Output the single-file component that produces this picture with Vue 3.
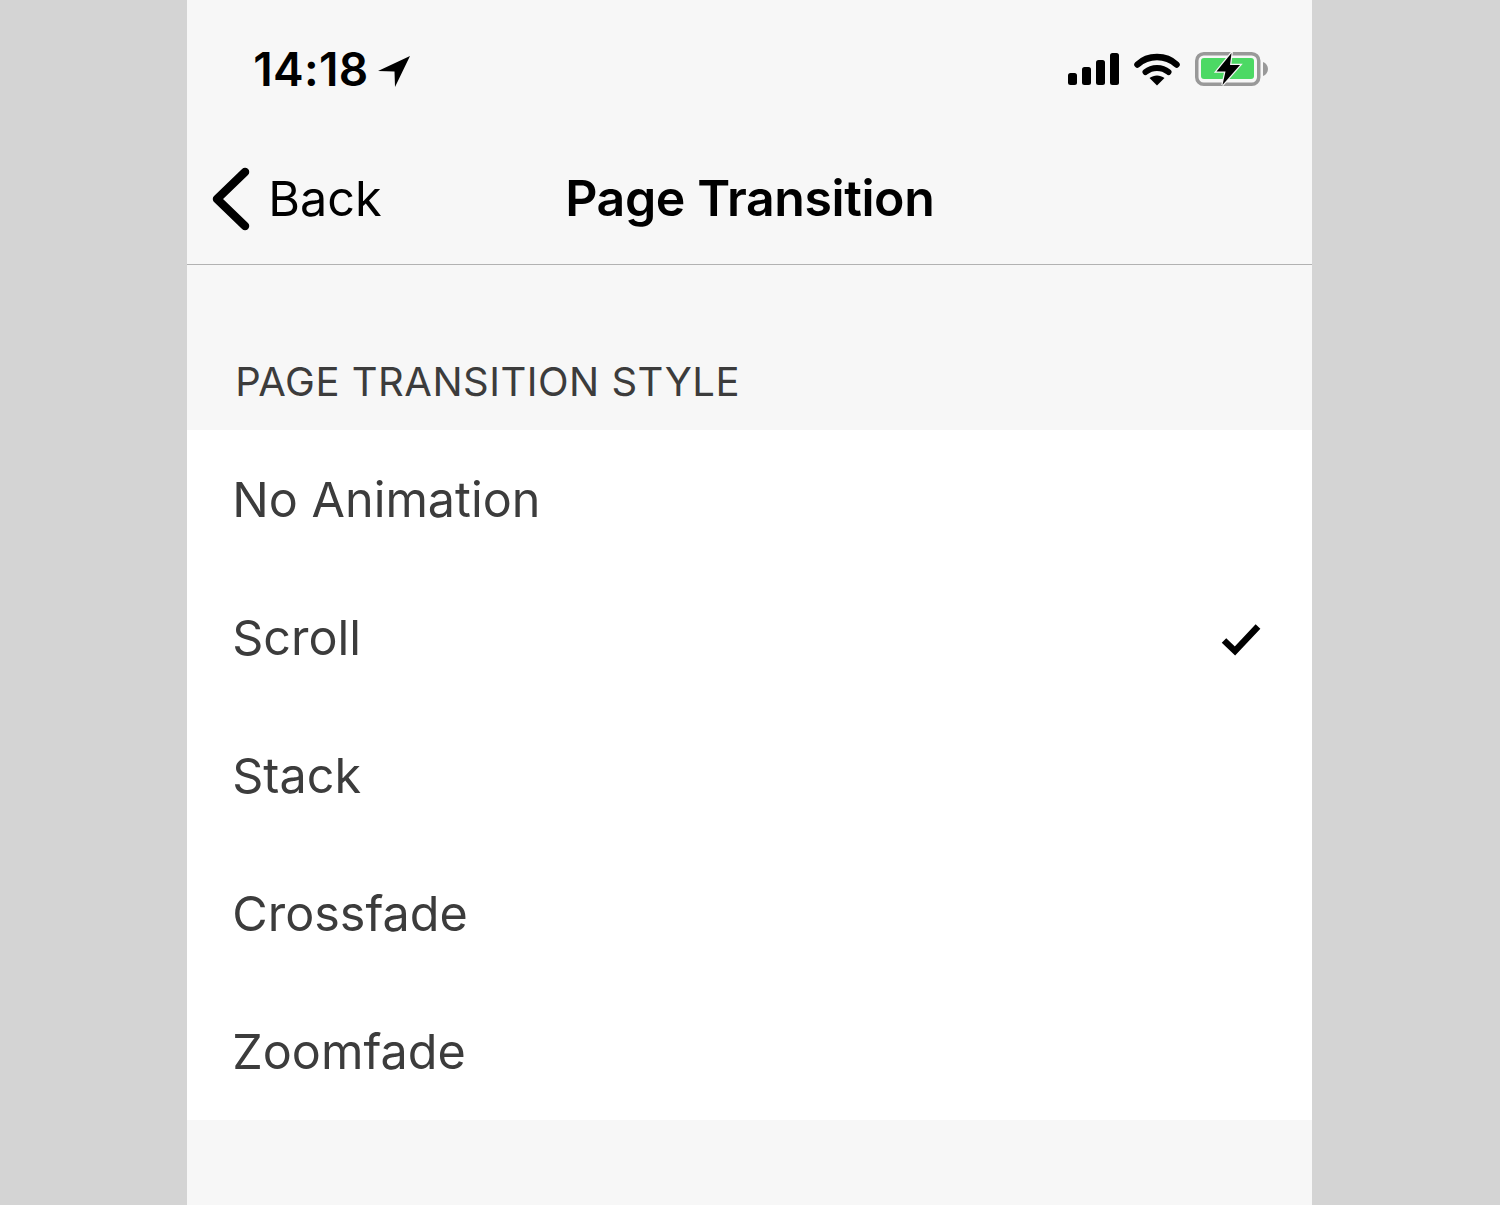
<template>
  <div class="page">
    <div class="phone">
      <div class="status-bar">
        <div class="status-left">
          <span class="time">14:18</span>
          <svg class="location" width="34" height="34" viewBox="0 0 34 34">
            <path d="M1 17 L33 2 L18 33 L17.5 17.5 Z" fill="#000" />
          </svg>
        </div>
        <div class="status-right">
          <svg width="52" height="32" viewBox="0 0 52 32">
            <rect x="0" y="20" width="9" height="12" rx="2.5" />
            <rect x="14" y="14" width="9" height="18" rx="2.5" />
            <rect x="28" y="7" width="9" height="25" rx="2.5" />
            <rect x="42" y="0" width="9" height="32" rx="2.5" />
          </svg>
          <svg width="46" height="34" viewBox="0 0 46 34">
            <path d="M3.5 12.5 C14 2.5 32 2.5 42.5 12.5" fill="none" stroke="#000" stroke-width="6.5" stroke-linecap="round" />
            <path d="M11.5 20 C18 14.5 28 14.5 34.5 20" fill="none" stroke="#000" stroke-width="6" stroke-linecap="round" />
            <path d="M15.5 26 C20 22.5 26 22.5 30.5 26 L23 33.5 Z" fill="#000" />
          </svg>
          <svg class="battery" width="74" height="36" viewBox="0 0 74 36">
            <rect x="1.75" y="2.75" width="62" height="30.5" rx="7" fill="none" stroke="#999" stroke-width="3.5" />
            <rect x="6" y="7" width="53" height="21" rx="3" fill="#4cd964" />
            <path d="M68 11 C71 12 73 15 73 18 C73 21 71 24 68 25 Z" fill="#999" />
            <path d="M36.5 2 L21.5 20.5 L30.5 20.5 L27.5 34 L45 14 L35 14 Z" fill="#000" stroke="#f7f7f7" stroke-width="2.5" paint-order="stroke" />
          </svg>
        </div>
      </div>

      <div class="nav-bar">
        <div class="back">
          <svg width="40" height="66" viewBox="0 0 40 66">
            <path d="M34 6 L6 33 L34 60" fill="none" stroke="#000" stroke-width="8.5" stroke-linecap="round" stroke-linejoin="round" />
          </svg>
          <span>Back</span>
        </div>
        <div class="title">Page Transition</div>
      </div>

      <div class="section-header">PAGE TRANSITION STYLE</div>

      <ul class="options">
        <li v-for="option in options" :key="option" class="option">
          <span>{{ option }}</span>
          <svg v-if="option === selected" class="check" width="40" height="34" viewBox="0 0 40 34">
            <path d="M3 16.5 L14 27 L37 2.5" fill="none" stroke="#000" stroke-width="6.5" />
          </svg>
        </li>
      </ul>
    </div>
  </div>
</template>

<script setup>
const options = ['No Animation', 'Scroll', 'Stack', 'Crossfade', 'Zoomfade'];
const selected = 'Scroll';
</script>

<style>
html, body { margin: 0; background: #d4d4d4; }
</style>

<style scoped>
.page {
  height: 1205px;
  display: flex;
  justify-content: center;
  background: #d4d4d4;
  font-family: Inter, "Liberation Sans", sans-serif;
  overflow: hidden;
}
.phone { width: 1125px; margin-left: -0.5px; background: #f7f7f7; color: #000; }

.status-bar {
  height: 132px;
  box-sizing: border-box;
  padding: 6px 43px 0 66px;
  display: flex;
  justify-content: space-between;
  align-items: center;
}
.status-left { display: flex; align-items: center; gap: 9px; }
.time { font-size: 46px; font-weight: 600; letter-spacing: 0.3px; }
.location { margin-top: 4px; }
.status-right { display: flex; align-items: center; gap: 14px; }
.battery { margin-left: 1px; }

.nav-bar {
  height: 133px;
  box-sizing: border-box;
  border-bottom: 1px solid #b2b2b2;
  position: relative;
  display: flex;
  align-items: center;
  justify-content: center;
}
.back {
  position: absolute;
  left: 24px;
  top: 32px;
  display: flex;
  align-items: center;
  gap: 17px;
  font-size: 48.5px;
}
.back svg { margin-top: 2px; }
.title { font-size: 50px; font-weight: 600; letter-spacing: -0.4px; }

.section-header {
  height: 165px;
  box-sizing: border-box;
  padding: 0 0 24px 48px;
  display: flex;
  align-items: flex-end;
  font-size: 40px;
  letter-spacing: 0.5px;
  color: #3c3c3c;
}

.options { list-style: none; margin: 0; padding: 0; background: #fff; }
.option {
  height: 138px;
  box-sizing: border-box;
  padding: 0 51px 0 45px;
  display: flex;
  align-items: center;
  justify-content: space-between;
  font-size: 48.5px;
  color: #3c3c3c;
}
.check { margin-top: 8px; }
</style>
